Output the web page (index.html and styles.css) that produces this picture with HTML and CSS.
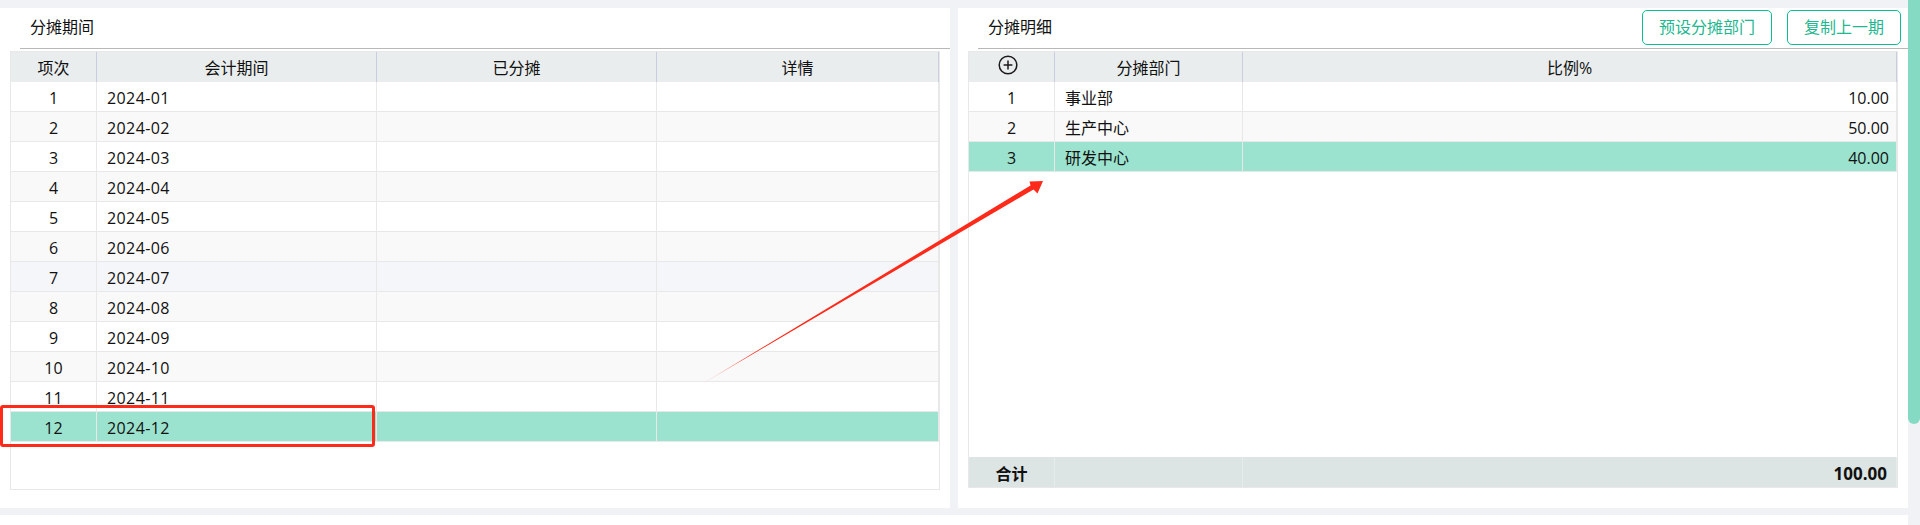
FILE: index.html
```html
<!DOCTYPE html>
<html lang="zh">
<head>
<meta charset="utf-8">
<title>分摊</title>
<link rel="stylesheet" href="styles.css">
</head>
<body>
<div class="page">
  <main class="content">
    <section class="panel">
      <header class="panel-head"><h2 class="panel-title">分摊期间</h2></header>
      <div class="frame">
        <table class="grid grid-left">
          <colgroup><col class="c-idx"><col class="c-period"><col class="c-done"><col class="c-more"></colgroup>
          <thead><tr><th>项次</th><th>会计期间</th><th>已分摊</th><th>详情</th></tr></thead>
          <tbody>
            <tr><td class="ctr">1</td><td class="date">2024-01</td><td></td><td></td></tr>
            <tr><td class="ctr">2</td><td class="date">2024-02</td><td></td><td></td></tr>
            <tr><td class="ctr">3</td><td class="date">2024-03</td><td></td><td></td></tr>
            <tr><td class="ctr">4</td><td class="date">2024-04</td><td></td><td></td></tr>
            <tr><td class="ctr">5</td><td class="date">2024-05</td><td></td><td></td></tr>
            <tr><td class="ctr">6</td><td class="date">2024-06</td><td></td><td></td></tr>
            <tr class="hover"><td class="ctr">7</td><td class="date">2024-07</td><td></td><td></td></tr>
            <tr><td class="ctr">8</td><td class="date">2024-08</td><td></td><td></td></tr>
            <tr><td class="ctr">9</td><td class="date">2024-09</td><td></td><td></td></tr>
            <tr><td class="ctr">10</td><td class="date">2024-10</td><td></td><td></td></tr>
            <tr><td class="ctr">11</td><td class="date">2024-11</td><td></td><td></td></tr>
            <tr class="selected"><td class="ctr">12</td><td class="date">2024-12</td><td></td><td></td></tr>
          </tbody>
        </table>
      </div>
    </section>
    <section class="panel">
      <header class="panel-head">
        <h2 class="panel-title">分摊明细</h2>
        <div class="actions">
          <button class="btn" type="button">预设分摊部门</button>
          <button class="btn" type="button">复制上一期</button>
        </div>
      </header>
      <div class="frame frame-right">
        <table class="grid grid-right">
          <colgroup><col class="c-add"><col class="c-dept"><col class="c-ratio"></colgroup>
          <thead>
            <tr>
              <th class="add-cell">
                <svg class="add-icon" viewBox="0 0 20 20" aria-label="添加"><circle cx="10" cy="10" r="8.8"/><path d="M10 5.6v8.8M5.6 10h8.8"/></svg>
              </th>
              <th>分摊部门</th><th>比例%</th>
            </tr>
          </thead>
          <tbody>
            <tr><td class="ctr">1</td><td>事业部</td><td class="num">10.00</td></tr>
            <tr><td class="ctr">2</td><td>生产中心</td><td class="num">50.00</td></tr>
            <tr class="selected"><td class="ctr">3</td><td>研发中心</td><td class="num">40.00</td></tr>
          </tbody>
        </table>
        <table class="grid grid-right grid-foot">
          <colgroup><col class="c-add"><col class="c-dept"><col class="c-ratio"></colgroup>
          <tfoot><tr><td class="ctr">合计</td><td></td><td class="num">100.00</td></tr></tfoot>
        </table>
      </div>
    </section>
  </main>
  <aside class="scrollbar"><div class="thumb"></div></aside>
  <div class="mark-box"></div>
  <svg class="mark-arrow" viewBox="0 0 1920 525">
    <defs>
      <linearGradient id="fade" gradientUnits="userSpaceOnUse" x1="702" y1="384" x2="1043" y2="181">
        <stop offset="0" stop-color="#ff2a1a" stop-opacity="0.35"/>
        <stop offset="0.15" stop-color="#ff2a1a"/>
        <stop offset="1" stop-color="#ff2a1a"/>
      </linearGradient>
    </defs>
    <polygon fill="url(#fade)" points="702,384 1030.5,185.5 1029.5,181.5 1043,181 1037.5,193.5 1033.5,189.5"/>
  </svg>
</div>
</body>
</html>
```
FILE: styles.css
```css
* { box-sizing: border-box; }
html, body { margin: 0; padding: 0; background: #fff; overflow: hidden; }
body {
  font-family: "Open Sans", "Noto Sans CJK SC", sans-serif;
  font-size: 16px;
  color: #111;
}
.page { position: relative; display: flex; width: 1920px; height: 525px; }
.content {
  width: 1908px;
  height: 515px;
  padding-top: 8px;
  display: grid;
  grid-template-columns: 950px 950px;
  column-gap: 8px;
  background: #f0f2f6;
}
.panel { height: 500px; background: #fff; display: flex; flex-direction: column; }
.panel-head {
  height: 41px;
  margin-left: 20px;
  padding: 0 7px 2px 10px;
  border-bottom: 1px solid #b8b8b8;
  display: flex;
  align-items: center;
  justify-content: space-between;
}
.panel-title { margin: 0; font-size: 16px; font-weight: 400; line-height: 38px; }
.actions { display: flex; gap: 15px; }
.btn {
  height: 35px;
  padding: 0 16px;
  font: inherit;
  line-height: 32px;
  color: #22b78f;
  background: #fff;
  border: 1px solid #0dbd91;
  border-radius: 5px;
}
.frame {
  width: 930px;
  height: 439px;
  margin: 2px 0 0 10px;
  border: 1px solid #e8e8e8;
}
.frame-right {
  height: 437px;
  display: flex;
  flex-direction: column;
  justify-content: space-between;
}
.grid { width: 100%; border-collapse: separate; border-spacing: 0; table-layout: fixed; }
.c-idx { width: 86px; }
.c-period, .c-done { width: 280px; }
.c-add { width: 86px; }
.c-dept { width: 188px; }
th {
  height: 30px;
  padding: 2px 0 0;
  font-weight: 400;
  text-align: center;
  background: #e9eded;
  border-right: 1px solid #c9cde0;
  line-height: 26px;
}
td {
  height: 30px;
  padding: 3px 7px 0 10px;
  line-height: 26px;
  background: #fff;
  border-right: 1px solid #e8e8e8;
  border-bottom: 1px solid #e8e8e8;
}
.date { letter-spacing: 0.4px; }
tbody tr:nth-child(even) td { background: #f9f9f9; }
tbody tr.hover td { background: #f4f6fa; }
tbody tr.selected td { background: #9ce3cf; border-bottom-color: #e8e8e8; }
.ctr { text-align: center; padding-left: 0; padding-right: 0; }
.num { text-align: right; }
.add-cell { padding: 0 0 4px; vertical-align: middle; }
.add-icon {
  display: block;
  width: 20px;
  height: 20px;
  margin-left: 29px;
  fill: none;
  stroke: #1a1a1a;
  stroke-width: 1.5;
}
.grid-foot td {
  background: #dce5e3;
  font-weight: 700;
  border-right-color: #e6ecea;
  border-bottom: 0;
}
.grid-foot .num { padding-right: 9px; font-size: 17px; }
.scrollbar { width: 12px; height: 525px; background: #f0f2f6; }
.thumb { height: 424px; background: #84dac2; border-radius: 0 0 6px 6px; }
.mark-box {
  position: absolute;
  left: 0;
  top: 405px;
  width: 375px;
  height: 42px;
  border: 3px solid #ff2a1a;
  border-radius: 3px;
}
.mark-arrow { position: absolute; left: 0; top: 0; width: 1920px; height: 525px; pointer-events: none; }
```
